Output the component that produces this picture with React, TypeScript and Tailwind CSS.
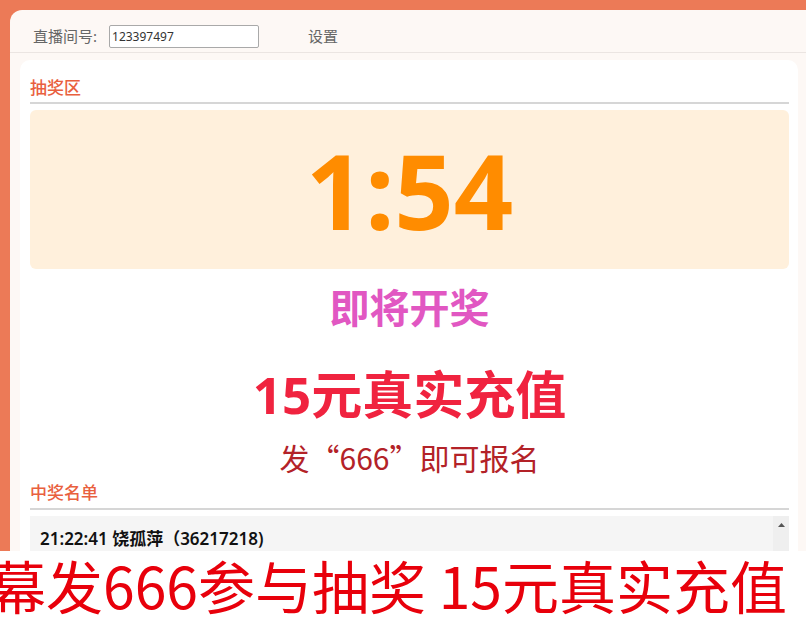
export default function App() {
    return (
        <div className="relative flex h-[618px] w-[806px] flex-col overflow-hidden bg-[#ec7a57] font-['Noto_Sans','Noto_Sans_CJK_SC',sans-serif]">
            <div className="flex flex-1 flex-col pl-[10px] pt-[10px]">
                <div className="flex flex-1 flex-col rounded-tl-[12px] bg-[#fdf8f5]">
                    {/* header */}
                    <div className="flex h-[43px] items-end border-b border-[#ebe5e2] pb-[4px] pl-[23px] text-[15px] text-[#666]">
                        <span className="leading-[23px]">直播间号:</span>
                        <div className="ml-[12px] flex h-[23px] w-[150px] items-center rounded-[2px] border border-[#a9a9a9] bg-white pl-[2px] text-[12px] text-[#333]">
                            123397497
                        </div>
                        <span className="ml-[49px] leading-[23px]">设置</span>
                    </div>

                    {/* card */}
                    <div className="ml-[10px] mr-[8px] mt-[7px] flex flex-1 flex-col rounded-[10px] bg-white pl-[10px] pr-[9px]">
                        <div className="h-[44px] border-b-2 border-[#d6d6d6] pt-[16px] text-[17px] leading-[24px] font-medium text-[#e9603e]">
                            抽奖区
                        </div>
                        <div className="mt-[6px] flex h-[159px] items-center justify-center rounded-[6px] bg-[#fff0dc]">
                            <span className="text-[104px] leading-none font-bold text-[#ff8c00]">1:54</span>
                        </div>
                        <div className="mt-[15px] text-center text-[40px] leading-[48px] font-bold text-[#e157c2]">
                            即将开奖
                        </div>
                        <div className="mt-[32px] text-center text-[51px] leading-[60px] font-bold text-[#f0233f]">
                            15元真实充值
                        </div>
                        <div className="mt-[13px] text-center text-[30px] leading-[40px] text-[#b32228] font-['Noto_Sans_CJK_SC',sans-serif]">
                            发“666”即可报名
                        </div>
                        <div className="mt-[4px] h-[29px] border-b-2 border-[#d6d6d6] text-[17px] leading-[24px] font-medium text-[#e9603e]">
                            中奖名单
                        </div>
                        <div className="mt-[6px] flex flex-1 bg-[#f5f5f5]">
                            <div className="flex-1 pl-[10px] pt-[12px] text-[17px] leading-[22px] font-semibold text-[#111]">
                                21:22:41 饶孤萍（36217218)
                            </div>
                            <div className="flex w-[16px] justify-center bg-[#efefef] pt-[7px]">
                                <svg width="7" height="4" viewBox="0 0 7 4">
                                    <path d="M3.5 0 L7 4 L0 4 Z" fill="#555" />
                                </svg>
                            </div>
                        </div>
                    </div>
                </div>
            </div>

            {/* caption banner */}
            <div className="absolute bottom-0 left-0 flex h-[67px] w-full items-center justify-end overflow-hidden bg-white pr-[19px]">
                <span className="whitespace-nowrap text-[57px] leading-none text-[#e8000b] font-['Noto_Sans_CJK_SC',sans-serif]">
                    弹幕发666参与抽奖 15元真实充值
                </span>
            </div>
        </div>
    );
}
